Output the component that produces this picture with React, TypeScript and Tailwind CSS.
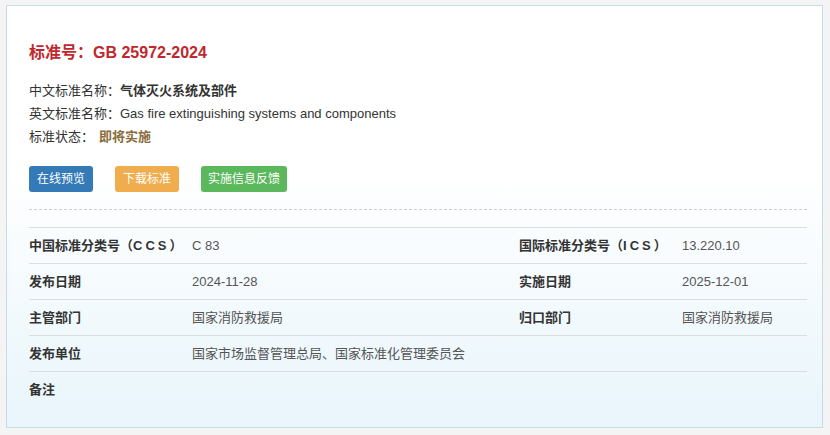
const font = { fontFamily: '"Liberation Sans", Arial, "Noto Sans CJK SC", sans-serif' };

const rows: [React.ReactNode, string, React.ReactNode?, string?][] = [
  [
    <>中国标准分类号（<span className="tracking-[3px]">CCS</span>）</>,
    'C 83',
    <>国际标准分类号（<span className="tracking-[3px]">ICS</span>）</>,
    '13.220.10',
  ],
  ['发布日期', '2024-11-28', '实施日期', '2025-12-01'],
  ['主管部门', '国家消防救援局', '归口部门', '国家消防救援局'],
  ['发布单位', '国家市场监督管理总局、国家标准化管理委员会'],
  ['备注', ''],
];

export default function App() {
  return (
    <div className="w-[830px] h-[435px] bg-[#f4f4f4] pt-[5px] pl-[6px] pr-[7px] pb-[7px]" style={font}>
      <div className="h-full border border-[#c6dde9] bg-gradient-to-b from-white from-40% to-[#e8f5fb] pl-[22px] pr-[15px] pt-[37px]">
        <h1 className="text-[16px] leading-[20px] font-bold text-[#c0282e]">标准号：GB 25972-2024</h1>

        <div className="mt-[16px] text-[13px] leading-[23px] text-[#333]">
          <div>
            中文标准名称：<span className="font-bold">气体灭火系统及部件</span>
          </div>
          <div>英文标准名称：Gas fire extinguishing systems and components</div>
          <div>
            标准状态：<span className="ml-[5px] font-bold text-[#8a6d3b]">即将实施</span>
          </div>
        </div>

        <div className="mt-[18px] flex gap-[22px] text-[12px] text-white">
          <button className="h-[26px] px-[8px] rounded-[3px] bg-[#337ab7]">在线预览</button>
          <button className="h-[26px] px-[8px] rounded-[3px] bg-[#f0ad4e]">下载标准</button>
          <button className="h-[26px] px-[7px] rounded-[3px] bg-[#5cb85c]">实施信息反馈</button>
        </div>

        <div className="mt-[17px] border-t border-dashed border-[#cfcfcf]" />

        <div className="mt-[17px] text-[13px]">
          {rows.map(([l1, v1, l2, v2], i) => (
            <div key={i} className="grid grid-cols-[163px_327px_163px_1fr] h-[36px] items-center border-t border-[#dddddd]">
              <div className="font-bold text-[#333]">{l1}</div>
              <div className={`text-[#555] ${l2 ? '' : 'col-span-3'}`}>{v1}</div>
              {l2 && <div className="font-bold text-[#333]">{l2}</div>}
              {l2 && <div className="text-[#555]">{v2}</div>}
            </div>
          ))}
        </div>
      </div>
    </div>
  );
}
